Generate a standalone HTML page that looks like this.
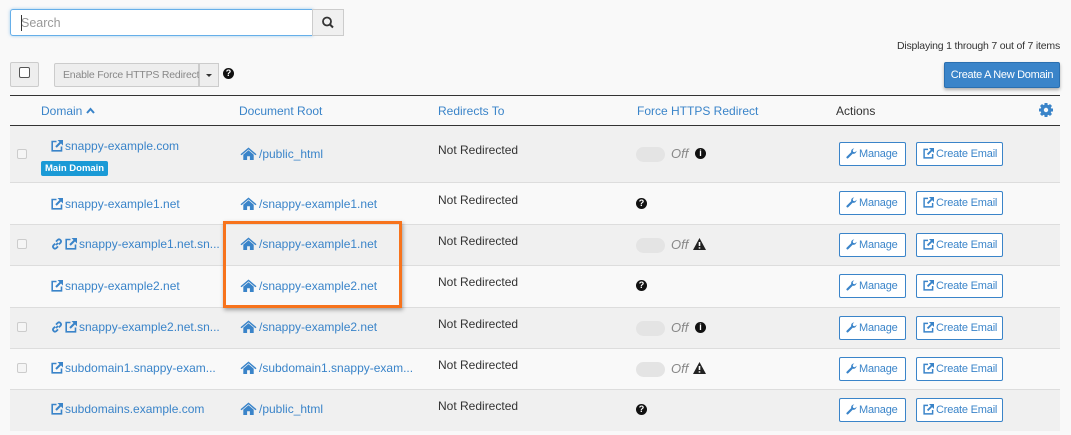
<!DOCTYPE html>
<html><head><style>
*{box-sizing:border-box;margin:0;padding:0}
body{width:1071px;height:435px;background:#f9f9f9;font-family:"Liberation Sans",sans-serif;font-size:12px;color:#333;position:relative;overflow:hidden}
.a{position:absolute;white-space:nowrap}
.lnk{color:#3a84c9}
.row{position:absolute;left:10px;width:1050px;border-bottom:1px solid #ddd}
.cb{position:absolute;left:7px;width:10px;height:10px;border:1px solid #ccc;border-radius:2px;background:#f5f5f5}
.btn{position:absolute;height:24px;border:1px solid #3a84c9;background:#fff;color:#3a84c9;font-size:11px;line-height:22px;padding-left:6px;border-radius:2px;white-space:nowrap;letter-spacing:-.2px}
.btn svg,.lnk svg{vertical-align:-2px;margin-right:2px}
.tg{position:absolute;left:626px;width:29px;height:15px;border-radius:8px;background:#e4e4e4}
.off{position:absolute;left:661px;font-style:italic;color:#888;font-size:13px}
.ic{position:absolute;width:11px;height:11px;border-radius:50%;background:#111;color:#fff;font-size:9px;font-weight:bold;text-align:center;line-height:11px}
</style></head><body>
<svg width="0" height="0" style="position:absolute">
<defs>
<symbol id="ext" viewBox="0 0 12 12"><path d="M5.5 1.5H1.2v9.3h9.3V6.5" stroke="currentColor" stroke-width="1.6" fill="none"/><path d="M6.5 0H12v5.5z" fill="currentColor"/><path d="M10.5 1.5L5 7" stroke="currentColor" stroke-width="2"/></symbol>
<symbol id="home" viewBox="0 0 16 13"><path d="M8 .5L0 7.2l1 1.1L8 2.4l7 5.9 1-1.1zM2.8 7.6V13h3.8V9.3h2.8V13h3.8V7.6L8 3.3z" fill="currentColor"/></symbol>
<symbol id="wr" viewBox="0 0 12 12"><path d="M11.5 3A3.2 3.2 0 0 1 7.4 6.2L2.5 11.1a1.2 1.2 0 0 1-1.7-1.7L5.7 4.5A3.2 3.2 0 0 1 9 .5L7.3 2.2l.5 2 2 .5z" fill="currentColor"/></symbol>
<symbol id="ch" viewBox="0 0 12 12"><g fill="none" stroke="currentColor" stroke-width="1.8"><path d="M5 7L7 5"/><path d="M4.2 5.6L2.4 7.4a2 2 0 0 0 2.8 2.8L7 8.4"/><path d="M7.8 6.4l1.8-1.8a2 2 0 0 0-2.8-2.8L5 3.6"/></g></symbol>
<symbol id="wn" viewBox="0 0 13 12"><path d="M6.5 0L13 12H0z" fill="#222"/><path d="M6.5 4v4M6.5 9.3v1.3" stroke="#fff" stroke-width="1.6"/></symbol>
</defs></svg>
<div class="a" style="left:10px;top:9px;width:303px;height:27px;border:1px solid #66afe9;border-radius:3px 0 0 3px;background:#fff;box-shadow:0 0 3px rgba(102,175,233,.6)"><span style="position:absolute;left:10px;top:6px;color:#999;font-size:12.5px">Search</span><span style="position:absolute;left:10px;top:5px;width:1px;height:16px;background:#333"></span></div>
<div class="a" style="left:312px;top:9px;width:32px;height:27px;border:1px solid #ccc;background:#f0f0f0"><svg width="30" height="25"><circle cx="14" cy="11.5" r="4" stroke="#333" stroke-width="1.8" fill="none"/><line x1="17" y1="14.5" x2="20" y2="17.5" stroke="#333" stroke-width="2"/></svg></div>
<div class="a" style="right:11px;top:40px;font-size:10.5px;color:#333;letter-spacing:-.2px">Displaying 1 through 7 out of 7 items</div>
<div class="a" style="left:10px;top:62px;width:29px;height:25px;border:1px solid #ccc;background:#eee;border-radius:2px"><span style="position:absolute;left:8px;top:4px;width:11px;height:11px;border:1px solid #555;border-radius:2px;background:#fff"></span></div>
<div class="a" style="left:54px;top:63px;width:145px;height:24px;border:1px solid #ccc;background:#eee;color:#888;font-size:10.5px;line-height:22px;padding-left:8px;border-radius:2px 0 0 2px;letter-spacing:-.2px">Enable Force HTTPS Redirect</div>
<div class="a" style="left:199px;top:63px;width:20px;height:24px;border:1px solid #ccc;background:#eee"><span style="position:absolute;left:6px;top:10px;border:3px solid transparent;border-top:3px solid #333"></span></div>
<div class="ic" style="left:223px;top:68px">?</div>
<div class="a" style="left:944px;top:62px;width:116px;height:26px;background:#3a84c9;border:1px solid #2a6fb0;color:#fff;font-size:11px;letter-spacing:-.3px;line-height:24px;text-align:center;border-radius:2px;box-shadow:0 2px 3px rgba(0,0,0,.3)">Create A New Domain</div>
<div class="a" style="left:10px;top:95px;width:1050px;height:31px;border-top:1px solid #333;border-bottom:1px solid #333;font-size:12px">
<span class="a lnk" style="left:31px;top:8px">Domain <svg width="9" height="7" viewBox="0 0 9 7" style="vertical-align:1px"><path d="M1 6L4.5 2 8 6" stroke="#3a84c9" stroke-width="2" fill="none"/></svg></span>
<span class="a lnk" style="left:229px;top:8px">Document Root</span>
<span class="a lnk" style="left:428px;top:8px">Redirects To</span>
<span class="a lnk" style="left:627px;top:8px">Force HTTPS Redirect</span>
<span class="a" style="left:826px;top:8px">Actions</span>
<svg class="a" style="left:1028px;top:6px" width="16" height="16" viewBox="0 0 16 16"><circle cx="8" cy="8" r="5.5" fill="#3a84c9"/><g stroke="#3a84c9" stroke-width="3"><line x1="8" y1="1" x2="8" y2="15"/><line x1="1" y1="8" x2="15" y2="8"/><line x1="3" y1="3" x2="13" y2="13"/><line x1="13" y1="3" x2="3" y2="13"/></g><circle cx="8" cy="8" r="2.2" fill="#f9f9f9"/></svg>
</div>

<div class="row" style="top:126px;height:57px;background:#f0f0f0"><span class="cb" style="top:23px"></span>
<span class="a lnk" style="left:41px;top:13px"><svg width="12" height="12"><use href="#ext"/></svg>snappy-example.com</span>
<span class="a" style="left:31px;top:35px;background:#1a9ad6;color:#fff;font-size:9.5px;font-weight:bold;padding:2px 4px;border-radius:2px">Main Domain</span>
<span class="a lnk" style="left:230px;top:21px"><svg width="17" height="13"><use href="#home"/></svg>/public_html</span>
<span class="a" style="left:428px;top:17px">Not Redirected</span>
<span class="tg" style="top:21px"></span><span class="off" style="top:20px">Off</span><span class="ic" style="left:685px;top:22px">i</span>
<span class="btn" style="left:829px;top:16px;width:67px"><svg width="11" height="11"><use href="#wr"/></svg>Manage</span><span class="btn" style="left:906px;top:16px;width:87px"><svg width="11" height="11"><use href="#ext"/></svg>Create Email</span></div>

<div class="row" style="top:183px;height:42px;background:#f9f9f9">
<span class="a lnk" style="left:41px;top:14px"><svg width="12" height="12"><use href="#ext"/></svg>snappy-example1.net</span>
<span class="a lnk" style="left:230px;top:14px"><svg width="17" height="13"><use href="#home"/></svg>/snappy-example1.net</span>
<span class="a" style="left:428px;top:10px">Not Redirected</span>
<span class="ic" style="left:626px;top:15px">?</span>
<span class="btn" style="left:829px;top:8px;width:67px"><svg width="11" height="11"><use href="#wr"/></svg>Manage</span><span class="btn" style="left:906px;top:8px;width:87px"><svg width="11" height="11"><use href="#ext"/></svg>Create Email</span></div>

<div class="row" style="top:225px;height:41px;background:#f0f0f0"><span class="cb" style="top:14px"></span>
<span class="a lnk" style="left:41px;top:12px"><svg width="12" height="12"><use href="#ch"/></svg><svg width="12" height="12"><use href="#ext"/></svg>snappy-example1.net.sn...</span>
<span class="a lnk" style="left:230px;top:12px"><svg width="17" height="13"><use href="#home"/></svg>/snappy-example1.net</span>
<span class="a" style="left:428px;top:9px">Not Redirected</span>
<span class="tg" style="top:13px"></span><span class="off" style="top:12px">Off</span><svg class="a" style="left:683px;top:13px" width="13" height="12"><use href="#wn"/></svg>
<span class="btn" style="left:829px;top:8px;width:67px"><svg width="11" height="11"><use href="#wr"/></svg>Manage</span><span class="btn" style="left:906px;top:8px;width:87px"><svg width="11" height="11"><use href="#ext"/></svg>Create Email</span></div>

<div class="row" style="top:266px;height:42px;background:#f9f9f9">
<span class="a lnk" style="left:41px;top:13px"><svg width="12" height="12"><use href="#ext"/></svg>snappy-example2.net</span>
<span class="a lnk" style="left:230px;top:13px"><svg width="17" height="13"><use href="#home"/></svg>/snappy-example2.net</span>
<span class="a" style="left:428px;top:9px">Not Redirected</span>
<span class="ic" style="left:626px;top:14px">?</span>
<span class="btn" style="left:829px;top:8px;width:67px"><svg width="11" height="11"><use href="#wr"/></svg>Manage</span><span class="btn" style="left:906px;top:8px;width:87px"><svg width="11" height="11"><use href="#ext"/></svg>Create Email</span></div>

<div class="row" style="top:308px;height:41px;background:#f0f0f0"><span class="cb" style="top:14px"></span>
<span class="a lnk" style="left:41px;top:12px"><svg width="12" height="12"><use href="#ch"/></svg><svg width="12" height="12"><use href="#ext"/></svg>snappy-example2.net.sn...</span>
<span class="a lnk" style="left:230px;top:12px"><svg width="17" height="13"><use href="#home"/></svg>/snappy-example2.net</span>
<span class="a" style="left:428px;top:9px">Not Redirected</span>
<span class="tg" style="top:13px"></span><span class="off" style="top:12px">Off</span><span class="ic" style="left:685px;top:14px">i</span>
<span class="btn" style="left:829px;top:8px;width:67px"><svg width="11" height="11"><use href="#wr"/></svg>Manage</span><span class="btn" style="left:906px;top:8px;width:87px"><svg width="11" height="11"><use href="#ext"/></svg>Create Email</span></div>

<div class="row" style="top:349px;height:41px;background:#f9f9f9"><span class="cb" style="top:14px"></span>
<span class="a lnk" style="left:41px;top:12px"><svg width="12" height="12"><use href="#ext"/></svg>subdomain1.snappy-exam...</span>
<span class="a lnk" style="left:230px;top:12px"><svg width="17" height="13"><use href="#home"/></svg>/subdomain1.snappy-exam...</span>
<span class="a" style="left:428px;top:9px">Not Redirected</span>
<span class="tg" style="top:13px"></span><span class="off" style="top:12px">Off</span><svg class="a" style="left:683px;top:13px" width="13" height="12"><use href="#wn"/></svg>
<span class="btn" style="left:829px;top:8px;width:67px"><svg width="11" height="11"><use href="#wr"/></svg>Manage</span><span class="btn" style="left:906px;top:8px;width:87px"><svg width="11" height="11"><use href="#ext"/></svg>Create Email</span></div>

<div class="row" style="top:390px;height:41px;background:#f0f0f0;border-bottom:none">
<span class="a lnk" style="left:41px;top:12px"><svg width="12" height="12"><use href="#ext"/></svg>subdomains.example.com</span>
<span class="a lnk" style="left:230px;top:12px"><svg width="17" height="13"><use href="#home"/></svg>/public_html</span>
<span class="a" style="left:428px;top:9px">Not Redirected</span>
<span class="ic" style="left:626px;top:14px">?</span>
<span class="btn" style="left:829px;top:8px;width:67px"><svg width="11" height="11"><use href="#wr"/></svg>Manage</span><span class="btn" style="left:906px;top:8px;width:87px"><svg width="11" height="11"><use href="#ext"/></svg>Create Email</span></div>

<div class="a" style="left:223px;top:221px;width:179px;height:87px;border:3px solid #f7731c;box-shadow:1px 2px 4px rgba(0,0,0,.35)"></div>
</body></html>
